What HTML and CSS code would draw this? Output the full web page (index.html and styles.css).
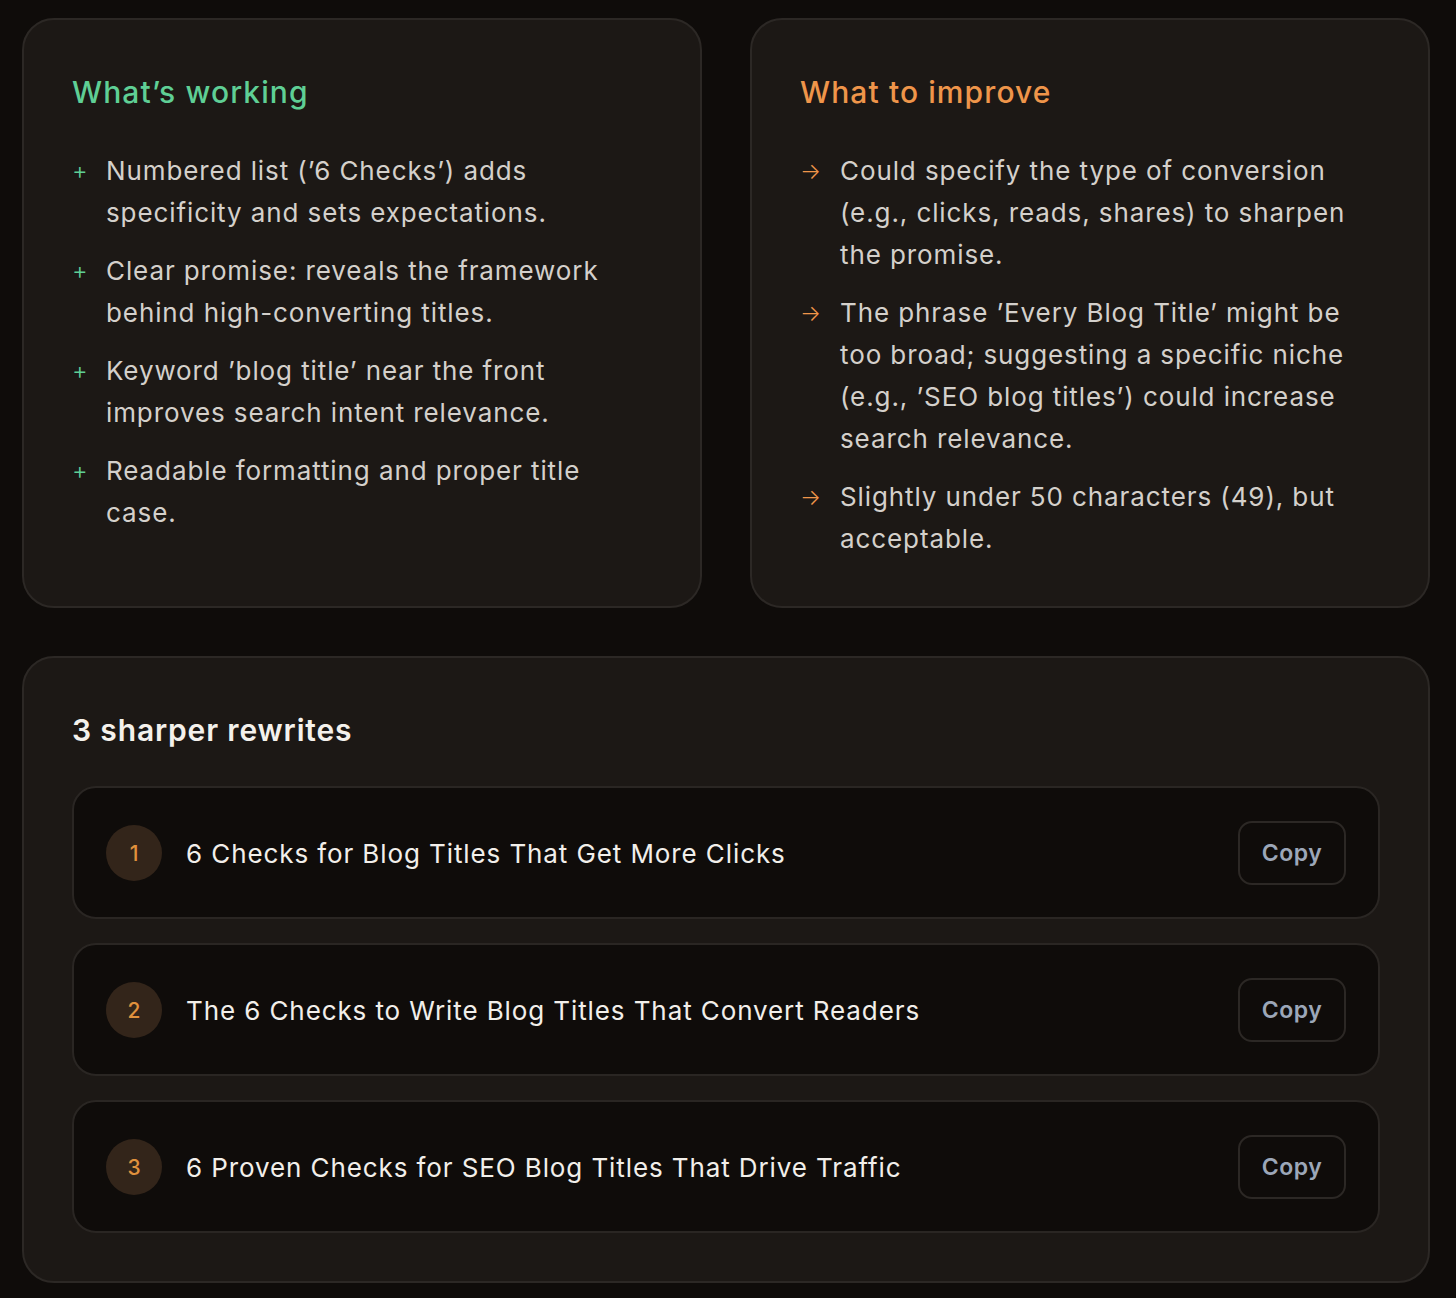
FILE: index.html
```html
<!DOCTYPE html>
<html lang="en">
<head>
    <meta charset="UTF-8">
    <meta name="viewport" content="width=device-width, initial-scale=1.0">
    <title>Title Review</title>
    <link rel="stylesheet" href="styles.css">
</head>
<body>
    <div class="page">
        <div class="feedback">
            <div class="card">
                <h2 class="card-title good">What’s working</h2>
                <ul class="points">
                    <li><span class="mark good">+</span><span>Numbered list (’6 Checks’) adds specificity and sets expectations.</span></li>
                    <li><span class="mark good">+</span><span>Clear promise: reveals the framework behind high-converting titles.</span></li>
                    <li><span class="mark good">+</span><span>Keyword ’blog title’ near the front improves search intent relevance.</span></li>
                    <li><span class="mark good">+</span><span>Readable formatting and proper title case.</span></li>
                </ul>
            </div>
            <div class="card">
                <h2 class="card-title warn">What to improve</h2>
                <ul class="points">
                    <li><span class="mark warn">→</span><span>Could specify the type of conversion (e.g., clicks, reads, shares) to sharpen the promise.</span></li>
                    <li><span class="mark warn">→</span><span>The phrase ’Every Blog Title’ might be too broad; suggesting a specific niche (e.g., ’SEO blog titles’) could increase search relevance.</span></li>
                    <li><span class="mark warn">→</span><span>Slightly under 50 characters (49), but acceptable.</span></li>
                </ul>
            </div>
        </div>

        <div class="card rewrites">
            <h2 class="card-title">3 sharper rewrites</h2>
            <div class="rewrite">
                <span class="num">1</span>
                <span class="rewrite-text">6 Checks for Blog Titles That Get More Clicks</span>
                <button class="copy">Copy</button>
            </div>
            <div class="rewrite">
                <span class="num">2</span>
                <span class="rewrite-text">The 6 Checks to Write Blog Titles That Convert Readers</span>
                <button class="copy">Copy</button>
            </div>
            <div class="rewrite">
                <span class="num">3</span>
                <span class="rewrite-text">6 Proven Checks for SEO Blog Titles That Drive Traffic</span>
                <button class="copy">Copy</button>
            </div>
        </div>
    </div>
</body>
</html>
```

FILE: styles.css
```css
body {
    margin: 0;
    background-color: #0f0c0a;
    font-family: Inter, "Noto Sans", sans-serif;
    color: #d4d0cb;
}
.page {
    padding: 18px 26px 12px 22px;
}
.feedback {
    display: grid;
    grid-template-columns: 1fr 1fr;
    gap: 48px;
}
.card {
    background-color: #1c1815;
    border: 2px solid #2c2825;
    border-radius: 32px;
    padding: 52px 48px 46px 48px;
}
.card-title {
    margin: 0;
    font-size: 30px;
    font-weight: 500;
    line-height: 40px;
    letter-spacing: 1.1px;
    color: #f4f1ec;
}
.card-title.good {
    color: #5fcf95;
}
.card-title.warn {
    color: #ef954a;
}
.points {
    list-style: none;
    margin: 38px 0 0 0;
    padding: 0;
}
.points li {
    display: flex;
    gap: 20px;
    font-size: 26px;
    line-height: 42px;
    letter-spacing: 0.9px;
    margin-bottom: 16px;
}
.points li:last-child {
    margin-bottom: 0;
}
.mark {
    flex: none;
    width: 14px;
    font-size: 24px;
    font-weight: 300;
}
.mark.good {
    color: #5fcf95;
}
.mark.warn {
    color: #ef954a;
    width: 20px;
    font-size: 22px;
}
.rewrites {
    margin-top: 48px;
    padding-top: 52px;
    padding-bottom: 48px;
}
.rewrites .card-title {
    font-weight: 600;
    letter-spacing: 0.85px;
    margin-bottom: 36px;
}
.rewrite {
    display: flex;
    align-items: center;
    background-color: #0f0c0a;
    border: 2px solid #2a2623;
    border-radius: 24px;
    padding: 33px 32px 32px 32px;
    margin-bottom: 24px;
}
.rewrite:last-child {
    margin-bottom: 0;
}
.num {
    flex: none;
    width: 56px;
    height: 56px;
    border-radius: 50%;
    background-color: #33251a;
    color: #e0913d;
    font-size: 21px;
    font-weight: 500;
    display: flex;
    align-items: center;
    justify-content: center;
}
.rewrite-text {
    flex: 1;
    margin-left: 24px;
    font-size: 26px;
    letter-spacing: 0.9px;
    color: #f2efea;
}
.copy {
    flex: none;
    width: 108px;
    height: 64px;
    background-color: #0f0c0a;
    border: 2px solid #2c2825;
    border-radius: 14px;
    color: #9ca7b8;
    font-family: Inter, "Noto Sans", sans-serif;
    font-size: 23px;
    font-weight: 600;
    letter-spacing: 0.5px;
    cursor: pointer;
}
```
